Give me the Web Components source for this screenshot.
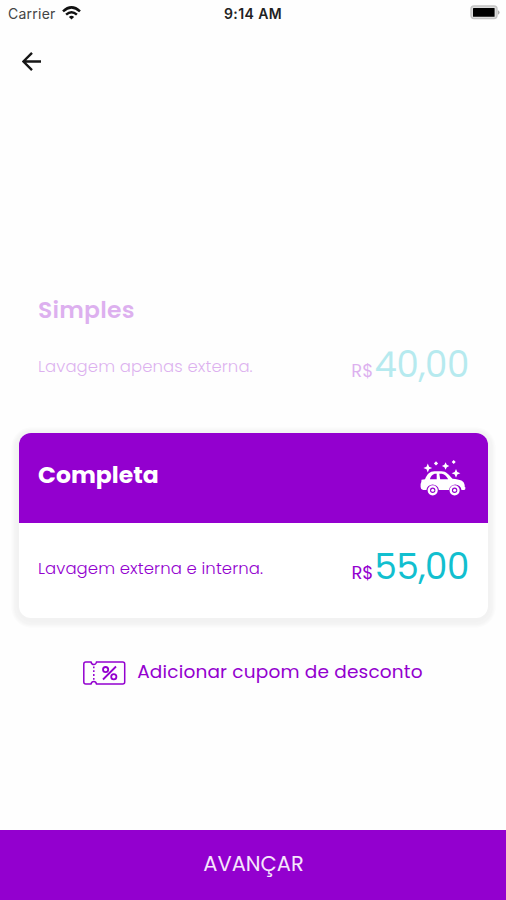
<!DOCTYPE html>
<html lang="pt-BR">
<head>
<meta charset="UTF-8">
<title>Lavagem</title>
<style>
    :root {
        --primary-color: #9300cf;
        --price-color: #12bfcf;
    }

    body {
        margin: 0;
        background: #fefefe;
        font-family: Poppins, Inter, "Open Sans", sans-serif;
    }
</style>
</head>
<body>
<wash-screen></wash-screen>

<script>
    // --- Status bar ---
    class StatusBar extends HTMLElement {
        constructor() {
            super();
            this.attachShadow({ mode: 'open' });
            this.shadowRoot.innerHTML = `
                <style>
                    :host {
                        display: grid;
                        grid-template-columns: 1fr auto 1fr;
                        align-items: center;
                        height: 27px;
                        padding: 0 6px 0 8px;
                        font: 14px/27px Inter, sans-serif;
                        color: #222;
                    }
                    .carrier { display: flex; align-items: center; gap: 6px; color: #444; letter-spacing: .25px; }
                    .time { font-size: 14px; font-weight: 600; letter-spacing: .4px; margin-right: 2px; }
                    .battery { justify-self: end; }
                    svg { display: block; margin-bottom: 2px; }
                </style>
                <span class="carrier">
                    <span>Carrier</span>
                    <svg width="19" height="14" viewBox="0 0 19 14" fill="none" stroke="#111" stroke-width="2.5">
                        <path d="M1 5.3Q9.5-2.6 18 5.3M4.1 8.6q5.4-4.8 10.8 0"/>
                        <path d="M6.9 10.9q2.6-2.2 5.2 0L9.5 13.6z" fill="#111" stroke="none"/>
                    </svg>
                </span>
                <span class="time">9:14 AM</span>
                <svg class="battery" width="30" height="15" viewBox="0 0 30 15">
                    <rect x="1" y="1" width="26" height="12.6" rx="3" fill="#ddd" stroke="#c4c4c4" stroke-width="1.4"/>
                    <rect x="3" y="3" width="21.6" height="8.8" rx=".6" fill="#000"/>
                    <path d="M28 5.2q3.2 2.2 0 4.6z" fill="#aaa"/>
                </svg>
            `;
        }
    }
    customElements.define('status-bar', StatusBar);

    // --- Back button ---
    class BackButton extends HTMLElement {
        constructor() {
            super();
            this.attachShadow({ mode: 'open' });
            this.shadowRoot.innerHTML = `
                <style>
                    :host { display: block; height: 20px; padding: 25px 0 0 22px; }
                    svg { display: block; }
                </style>
                <svg width="20" height="20" viewBox="0 0 20 20" fill="none" stroke="#161616" stroke-width="2.4">
                    <path d="M19 9.5H2M10 .9 1.400 9.500l8.600 8.600"/>
                </svg>
            `;
        }
    }
    customElements.define('back-button', BackButton);

    class CarIcon extends HTMLElement {
        constructor() {
            super();
            this.attachShadow({ mode: 'open' });
            this.shadowRoot.innerHTML = `
                <style>
                    :host { display: block; }
                    svg { display: block; }
                </style>
                <svg width="46" height="36" viewBox="0 0 46 36" fill="#fff">
                    <path d="M1.5 19.800 5 19.200C7.500 13.800 9.600 11.500 14.500 11.300h6.800c5.200 0 7.200 3.400 11.200 7.500 7.800.5 12 2.200 12.200 6.700v1.500h.6v2q0 1-1.600 1h-2.200a6.300 6.300 0 0 0-12.500 0H18.900a6.300 6.300 0 0 0-12.500 0H3.200Q.6 29.500.6 27v-3q.9-1 .9-4.200z"/>
                    <path d="M9.900 19.200q1.500-4.600 4.800-5.400h2v5.400zM19.300 13.800h2.400q3.600.4 6.500 5.400h-8z" fill="#9300cf"/>
                    <circle cx="12.700" cy="30.300" r="3.900" fill="none" stroke="#fff" stroke-width="2.400"/>
                    <circle cx="34.600" cy="30.300" r="3.900" fill="none" stroke="#fff" stroke-width="2.400"/>
                    <circle cx="12.700" cy="30.300" r="1.500"/>
                    <circle cx="34.600" cy="30.300" r="1.500"/>
                    <path d="M7.800 3.600l1.300 3.100 3.100 1.300-3.100 1.300-1.300 3.100-1.300-3.100L3.400 8l3.100-1.300z"/>
                    <path d="M25.600 2.300l1.200 2.500 2.500 1.200-2.500 1.200-1.200 2.500-1.200-2.500-2.500-1.200 2.500-1.200z"/>
                    <path d="M36 8.900l1.300 3.100 3.100 1.300-3.100 1.300-1.300 3.100-1.300-3.100-3.100-1.300 3.100-1.300z"/>
                    <path d="M16 1.300l2.100 2.100-2.100 2.100-2.100-2.100zM33.700 0l2 2-2 2-2-2z"/>
                </svg>
            `;
        }
    }
    customElements.define('car-icon', CarIcon);

    // --- Description + price row, shared by every wash option ---
    class PriceRow extends HTMLElement {
        constructor() {
            super();
            this.attachShadow({ mode: 'open' });
            this.shadowRoot.innerHTML = `
                <style>
                    :host {
                        display: flex;
                        justify-content: space-between;
                        align-items: center;
                        line-height: 44px;
                        white-space: nowrap;
                        color: var(--primary-color);
                    }
                    .description {
                        font-size: 16.5px;
                        font-weight: 300;
                        letter-spacing: .09px;
                        margin-bottom: 2px;
                    }
                    .price { display: flex; align-items: baseline; }
                    .currency { font-size: 18px; font-weight: 400; letter-spacing: 0; margin-right: 1px; }
                    .value {
                        font-size: 35.5px;
                        font-weight: 400;
                        letter-spacing: -.35px;
                        color: var(--price-color);
                    }
                </style>
                <span class="description"><slot></slot></span>
                <span class="price"><span class="currency">R$</span><span class="value"><slot name="price"></slot></span></span>
            `;
        }
    }
    customElements.define('price-row', PriceRow);

    // --- Wash option: plain when idle, card when selected ---
    class WashOption extends HTMLElement {
        constructor() {
            super();
            this.attachShadow({ mode: 'open' });
            this.shadowRoot.innerHTML = `
                <style>
                    :host {
                        display: block;
                        margin: 0 18px 0 19px;
                        opacity: .3;
                    }
                    .header {
                        display: flex;
                        justify-content: space-between;
                        align-items: center;
                        height: 90px;
                        padding: 0 22px 0 19px;
                        box-sizing: border-box;
                    }
                    h3 {
                        margin: 0 0 6px;
                        font-size: 23.5px;
                        font-weight: var(--title-weight, 700);
                        line-height: 30px;
                        letter-spacing: var(--title-spacing, 0);
                        color: var(--primary-color);
                    }
                    .body { height: 95px; box-sizing: border-box; padding: 0 19px; }
                    :host([selected]) {
                        opacity: 1;
                        border-radius: 12px;
                        background: #fff;
                        box-shadow: 0 2px 3px 6px rgba(0, 0, 0, .035), 0 2px 8px 5px rgba(0, 0, 0, .015);
                    }
                    :host([selected]) .header {
                        background: var(--primary-color);
                        border-radius: 12px 12px 0 0;
                    }
                    :host([selected]) h3 { color: #fff; }
                    :host([selected]) .body { padding-top: 22px; }
                </style>
                <div class="header">
                    <h3><slot name="title"></slot></h3>
                    <slot name="icon"></slot>
                </div>
                <div class="body"><slot></slot></div>
            `;
        }
    }
    customElements.define('wash-option', WashOption);

    // --- Coupon link ---
    class CouponLink extends HTMLElement {
        constructor() {
            super();
            this.attachShadow({ mode: 'open' });
            this.shadowRoot.innerHTML = `
                <style>
                    :host {
                        display: flex;
                        align-items: center;
                        justify-content: center;
                        gap: 11px;
                        height: 30px;
                        font-size: 18.5px;
                        font-weight: 400;
                        letter-spacing: .18px;
                        white-space: nowrap;
                        color: var(--primary-color);
                    }
                    svg { display: block; margin-top: 3px; }
                </style>
                <svg width="43" height="24" viewBox="0 0 43 24" fill="none" stroke="#9300cf" stroke-width="1.500">
                    <path d="M2.800 1H8q.5 2.500 2.800 2.500T13.500 1h26.200q2 0 2 2v18q0 2-2 2H13.500q-.5-2.500-2.700-2.500T8 23H2.800q-2 0-2-2V3q0-2 2-2z"/>
                    <path d="M10.800 5.500v14" stroke-dasharray="1.800 2"/>
                    <circle cx="22.600" cy="8.600" r="2.600" stroke-width="1.800"/>
                    <circle cx="30.800" cy="15.700" r="2.600" stroke-width="1.800"/>
                    <path d="M33 5.500 20 18.500" stroke-width="1.800"/>
                </svg>
                <span><slot></slot></span>
            `;
        }
    }
    customElements.define('coupon-link', CouponLink);

    class WashScreen extends HTMLElement {
        constructor() {
            super();
            this.attachShadow({ mode: 'open' });
            this.shadowRoot.innerHTML = `
                <style>
                    :host {
                        display: flex;
                        flex-direction: column;
                        height: 900px;
                        width: 506px;
                        overflow: hidden;
                    }
                    .options { padding-top: 196px; }
                    .simple { height: 165px; --title-weight: 600; --title-spacing: .2px; }
                    .simple price-row { margin-top: -15px; }
                    coupon-link { margin-top: 38px; }
                    button {
                        margin-top: auto;
                        height: 70px;
                        border: 0;
                        padding: 0 0 4px 1px;
                        background: var(--primary-color);
                        color: #f6e6fc;
                        font: 400 21px Poppins, Inter, sans-serif;
                    }
                </style>
                <status-bar></status-bar>
                <back-button></back-button>
                <div class="options">
                    <wash-option class="simple">
                        <span slot="title">Simples</span>
                        <price-row>Lavagem apenas externa.<span slot="price">40,00</span></price-row>
                    </wash-option>
                    <wash-option selected>
                        <span slot="title">Completa</span>
                        <car-icon slot="icon"></car-icon>
                        <price-row>Lavagem externa e interna.<span slot="price">55,00</span></price-row>
                    </wash-option>
                </div>
                <coupon-link>Adicionar cupom de desconto</coupon-link>
                <button>AVANÇAR</button>
            `;
        }
    }
    customElements.define('wash-screen', WashScreen);
</script>
</body>
</html>
